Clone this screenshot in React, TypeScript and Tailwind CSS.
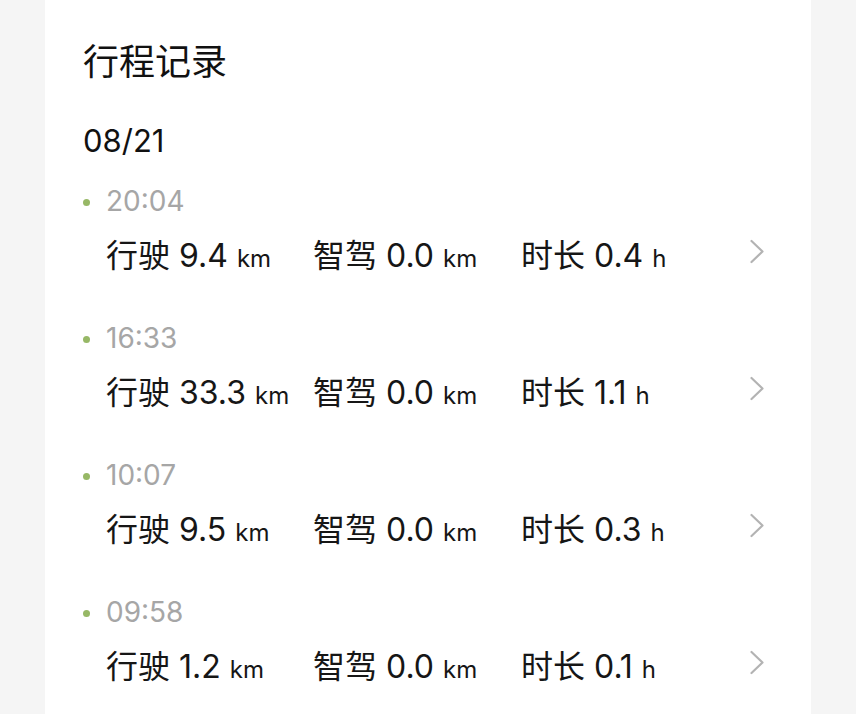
const trips = [
  { time: '20:04', drive: '9.4', smart: '0.0', hours: '0.4' },
  { time: '16:33', drive: '33.3', smart: '0.0', hours: '1.1' },
  { time: '10:07', drive: '9.5', smart: '0.0', hours: '0.3' },
  { time: '09:58', drive: '1.2', smart: '0.0', hours: '0.1' },
];

function Chevron() {
  return (
    <svg className="w-[16px] h-[25px]" viewBox="0 0 16 25" fill="none" stroke="#b3b3b3" strokeWidth={2.2} strokeLinecap="round" strokeLinejoin="round">
      <path d="M2.5 2 L13.5 12.5 L2.5 23" />
    </svg>
  );
}

function Stat({ label, value, unit }: { label: string; value: string; unit: string }) {
  return (
    <span className="whitespace-nowrap">
      {label} {value} <span className="text-[24px]">{unit}</span>
    </span>
  );
}

export default function App() {
  return (
    <div
      className="h-[714px] overflow-hidden bg-[#f5f5f5]"
      style={{ fontFamily: 'Inter, "Noto Sans CJK SC", sans-serif' }}
    >
      <div className="ml-[45px] w-[766px] h-full bg-white px-[38px] pt-[40px]">
        <h1 className="h-[44px] leading-[44px] text-[36px] text-[#111]">行程记录</h1>

        <div className="mt-[37px] h-[40px] leading-[40px] text-[31px] text-[#111]">08/21</div>

        <div className="mt-[23px]">
          {trips.map((t) => (
            <div key={t.time} className="h-[137px]">
              {/* 时间 */}
              <div className="flex items-center h-[34px]">
                <span className="w-[7px] h-[7px] rounded-full bg-[#97b866] mt-[3px]" />
                <span className="ml-[16px] text-[28px] leading-[34px] text-[#a6a6a6]">{t.time}</span>
              </div>

              {/* 数据 */}
              <div className="flex items-center h-[46px] mt-[16px] pl-[23px] text-[32px] leading-[46px] text-[#161616]">
                <div className="w-[207px]">
                  <Stat label="行驶" value={t.drive} unit="km" />
                </div>
                <div className="w-[208px]">
                  <Stat label="智驾" value={t.smart} unit="km" />
                </div>
                <div>
                  <Stat label="时长" value={t.hours} unit="h" />
                </div>
                <div className="ml-auto mr-[8px] -mt-[12px] flex">
                  <Chevron />
                </div>
              </div>
            </div>
          ))}
        </div>
      </div>
    </div>
  );
}
